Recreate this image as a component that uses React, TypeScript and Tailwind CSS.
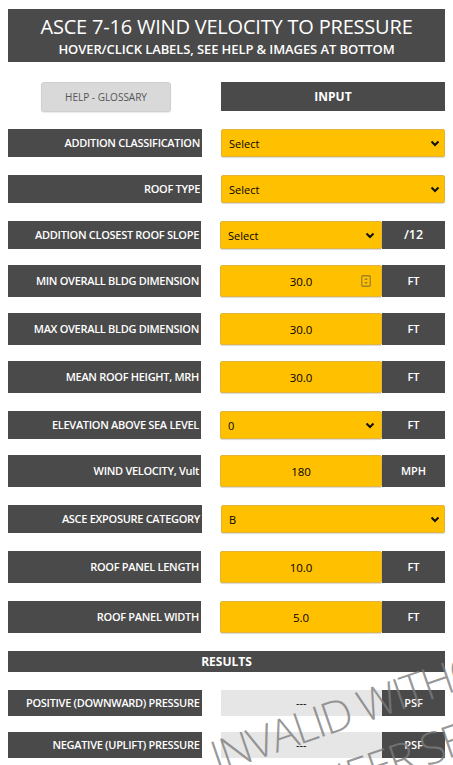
import React from 'react';

type Row = {
  label: string;
  kind: 'select' | 'number' | 'selectUnit';
  value: string;
  unit?: string;
  tall?: boolean;
  spin?: boolean;
  gap: string;
};

const rows: Row[] = [
  { label: 'ADDITION CLASSIFICATION', kind: 'select', value: 'Select', gap: 'mt-[18px]' },
  { label: 'ROOF TYPE', kind: 'select', value: 'Select', gap: 'mt-[18px]' },
  { label: 'ADDITION CLOSEST ROOF SLOPE', kind: 'selectUnit', value: 'Select', unit: '/12', gap: 'mt-[18px]' },
  { label: 'MIN OVERALL BLDG DIMENSION', kind: 'number', value: '30.0', unit: 'FT', tall: true, spin: true, gap: 'mt-[16px]' },
  { label: 'MAX OVERALL BLDG DIMENSION', kind: 'number', value: '30.0', unit: 'FT', tall: true, gap: 'mt-[16px]' },
  { label: 'MEAN ROOF HEIGHT, MRH', kind: 'number', value: '30.0', unit: 'FT', tall: true, gap: 'mt-[16px]' },
  { label: 'ELEVATION ABOVE SEA LEVEL', kind: 'selectUnit', value: '0', unit: 'FT', gap: 'mt-[18px]' },
  { label: 'WIND VELOCITY, Vult', kind: 'number', value: '180', unit: 'MPH', tall: true, gap: 'mt-[16px]' },
  { label: 'ASCE EXPOSURE CATEGORY', kind: 'select', value: 'B', gap: 'mt-[18px]' },
  { label: 'ROOF PANEL LENGTH', kind: 'number', value: '10.0', unit: 'FT', tall: true, gap: 'mt-[18px]' },
  { label: 'ROOF PANEL WIDTH', kind: 'number', value: '5.0', unit: 'FT', tall: true, gap: 'mt-[18px]' },
];

const Chevron = () => (
  <svg width="10" height="7" viewBox="0 0 10 7" className="shrink-0">
    <path d="M1.5 1.5 L5 5 L8.5 1.5" fill="none" stroke="#111" strokeWidth="2" />
  </svg>
);

const Spin = () => (
  <svg width="10" height="12" viewBox="0 0 10 12" className="absolute right-[10px] top-1/2 -translate-y-1/2">
    <rect x="0.75" y="0.75" width="8.5" height="10.5" rx="1" fill="none" stroke="#a0822a" strokeWidth="1.3" />
    <path d="M3.2 5 L5 2.8 L6.8 5 Z" fill="#a0822a" />
    <path d="M3.2 7 L5 9.2 L6.8 7 Z" fill="#a0822a" />
  </svg>
);

const Label = ({ text }: { text: string }) => (
  <div className="w-[194px] h-full bg-[#4a4a4a] flex items-center justify-end pr-[2px] text-white text-[11px] font-semibold tracking-[-0.3px] whitespace-nowrap">
    {text}
  </div>
);

const Unit = ({ text }: { text: string }) => (
  <div className="w-[63px] h-full bg-[#4a4a4a] flex items-center justify-center text-white text-[11px] font-semibold">
    {text}
  </div>
);

export default function App() {
  return (
    <div className="relative w-[453px] h-[765px] overflow-hidden bg-white px-[8px] pt-[9px] font-['Open_Sans',_'Liberation_Sans',_sans-serif]">
      <div className="h-[53px] bg-[#4a4a4a] flex flex-col items-center justify-center text-white">
        <div className="text-[20px] leading-[26px] tracking-[-0.2px]">ASCE 7-16 WIND VELOCITY TO PRESSURE</div>
        <div className="text-[13px] leading-[18px] font-semibold tracking-[-0.1px]">HOVER/CLICK LABELS, SEE HELP &amp; IMAGES AT BOTTOM</div>
      </div>

      <div className="mt-[20px] h-[29px] flex">
        <div className="w-[194px] flex justify-center pl-[2px]">
          <button className="w-[130px] h-[30px] bg-[#d9d9d9] border border-[#cfcfcf] rounded-[3px] text-[10px] text-[#555] shadow-[0_1px_1px_rgba(0,0,0,0.08)]">
            HELP - GLOSSARY
          </button>
        </div>
        <div className="ml-[19px] flex-1 bg-[#4a4a4a] flex items-center justify-center text-white text-[12px] font-bold">
          INPUT
        </div>
      </div>

      {rows.map((r) => (
        <div key={r.label} className={`${r.gap} flex ${r.tall ? 'h-[32px]' : 'h-[28px]'}`}>
          <Label text={r.label} />
          <div className="ml-[19px] flex-1 flex h-full">
            {r.kind === 'select' && (
              <div className="flex-1 h-full bg-[#ffc000] border border-[#e2b43c] rounded-[2px] shadow-[0_1px_1px_rgba(0,0,0,0.15)] flex items-center justify-between pl-[7px] pr-[4px] text-[11px] text-black">
                <span className="pt-[3px]">{r.value}</span>
                <Chevron />
              </div>
            )}
            {r.kind === 'selectUnit' && (
              <>
                <div className="w-[162px] h-full bg-[#ffc000] border border-[#e2b43c] rounded-[2px] shadow-[0_1px_1px_rgba(0,0,0,0.15)] flex items-center justify-between pl-[7px] pr-[6px] text-[11px] text-black">
                  <span className="pt-[3px]">{r.value}</span>
                  <Chevron />
                </div>
                <div className={`w-[63px] h-full bg-[#4a4a4a] flex items-center justify-center text-white font-semibold ${r.unit === '/12' ? 'text-[12.5px]' : 'text-[11px]'}`}>
                  {r.unit}
                </div>
              </>
            )}
            {r.kind === 'number' && (
              <>
                <div className="relative w-[162px] h-full bg-[#ffc000] border border-[#e2b43c] rounded-[2px] shadow-[0_1px_1px_rgba(0,0,0,0.15)] flex items-center justify-center text-[11.5px] text-black">
                  <span className="pt-[2px]">{r.value}</span>
                  {r.spin && <Spin />}
                </div>
                <Unit text={r.unit ?? ''} />
              </>
            )}
          </div>
        </div>
      ))}

      <div className="mt-[18px] h-[21px] bg-[#4a4a4a] flex items-center justify-center text-white text-[12px] font-bold">
        RESULTS
      </div>

      {[
        { label: 'POSITIVE (DOWNWARD) PRESSURE', gap: 'mt-[18px]' },
        { label: 'NEGATIVE (UPLIFT) PRESSURE', gap: 'mt-[16px]' },
      ].map((r) => (
        <div key={r.label} className={`${r.gap} h-[26px] flex`}>
          <Label text={r.label} />
          <div className="ml-[19px] w-[162px] h-full bg-[#e7e6e6] flex items-center justify-center text-[11px] text-black">---</div>
          <Unit text="PSF" />
        </div>
      ))}

      <div className="pointer-events-none absolute left-[219px] top-[734px] origin-bottom-left -rotate-[19deg] whitespace-nowrap text-[44px] leading-[44px] font-light text-[#7c7c7c]/80 tracking-[-2px] font-['Open_Sans',_sans-serif]">
        INVALID WITHOUT
      </div>
      <div className="pointer-events-none absolute left-[240px] top-[792px] origin-bottom-left -rotate-[19deg] whitespace-nowrap text-[44px] leading-[44px] font-light text-[#7c7c7c]/80 tracking-[-2px] font-['Open_Sans',_sans-serif]">
        ENGINEER SEAL
      </div>
    </div>
  );
}
